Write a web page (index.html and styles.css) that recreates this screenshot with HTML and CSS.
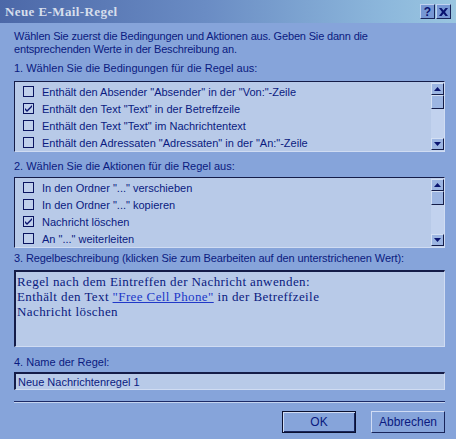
FILE: index.html
```html
<!DOCTYPE html>
<html>
<head>
<meta charset="utf-8">
<title>Neue E-Mail-Regel</title>
<link rel="stylesheet" href="styles.css">
</head>
<body>
<div class="window">
  <div class="titlebar">
    <span class="title">Neue E-Mail-Regel</span>
    <div class="tbtns">
      <span class="tbtn help">?</span>
      <span class="tbtn close"><svg width="9" height="8" viewBox="0 0 9 8"><path d="M0 0h2.5l2 2.6 2-2.6H9L6 4l3 4H6.5l-2-2.6-2 2.6H0l3-4z" fill="#0a1470"/></svg></span>
    </div>
  </div>
  <div class="content">
    <p class="intro">Wählen Sie zuerst die Bedingungen und Aktionen aus. Geben Sie dann die<br>entsprechenden Werte in der Beschreibung an.</p>

    <div class="label l1">1. Wählen Sie die Bedingungen für die Regel aus:</div>
    <div class="list list1">
      <div class="rows">
        <div class="row"><span class="cb"></span>Enthält den Absender "Absender" in der "Von:"-Zeile</div>
        <div class="row"><span class="cb checked"><svg width="9" height="9" viewBox="0 0 9 9"><path d="M1 4l2 2 5-5v2L3 8 1 6z" fill="#0a1470"/></svg></span>Enthält den Text "Text" in der Betreffzeile</div>
        <div class="row"><span class="cb"></span>Enthält den Text "Text" im Nachrichtentext</div>
        <div class="row"><span class="cb"></span>Enthält den Adressaten "Adressaten" in der "An:"-Zeile</div>
      </div>
      <div class="scroll">
        <span class="sbtn"><svg width="7" height="4" viewBox="0 0 7 4"><path d="M3.5 0L7 4H0z" fill="#0a1470"/></svg></span>
        <span class="thumb"></span>
        <span class="track"></span>
        <span class="sbtn"><svg width="7" height="4" viewBox="0 0 7 4"><path d="M0 0h7L3.5 4z" fill="#0a1470"/></svg></span>
      </div>
    </div>

    <div class="label l2">2. Wählen Sie die Aktionen für die Regel aus:</div>
    <div class="list list2">
      <div class="rows">
        <div class="row"><span class="cb"></span>In den Ordner "..." verschieben</div>
        <div class="row"><span class="cb"></span>In den Ordner "..." kopieren</div>
        <div class="row"><span class="cb checked"><svg width="9" height="9" viewBox="0 0 9 9"><path d="M1 4l2 2 5-5v2L3 8 1 6z" fill="#0a1470"/></svg></span>Nachricht löschen</div>
        <div class="row"><span class="cb"></span>An "..." weiterleiten</div>
      </div>
      <div class="scroll">
        <span class="sbtn"><svg width="7" height="4" viewBox="0 0 7 4"><path d="M3.5 0L7 4H0z" fill="#0a1470"/></svg></span>
        <span class="thumb"></span>
        <span class="track"></span>
        <span class="sbtn"><svg width="7" height="4" viewBox="0 0 7 4"><path d="M0 0h7L3.5 4z" fill="#0a1470"/></svg></span>
      </div>
    </div>

    <div class="label l3">3. Regelbeschreibung (klicken Sie zum Bearbeiten auf den unterstrichenen Wert):</div>
    <div class="desc">
      Regel nach dem Eintreffen der Nachricht anwenden:<br>
      Enthält den Text <a class="link" href="#">"Free Cell Phone"</a> in der Betreffzeile<br>
      Nachricht löschen
    </div>

    <div class="label l4">4. Name der Regel:</div>
    <div class="input">Neue Nachrichtenregel 1</div>

    <div class="sep"></div>

    <div class="buttons">
      <span class="btn default">OK</span>
      <span class="btn">Abbrechen</span>
    </div>
  </div>
</div>
</body>
</html>
```

FILE: styles.css
```css
html, body {
  margin: 0;
  padding: 0;
  background: #86a4da;
}

body {
  font-family: "Liberation Sans", Arial, sans-serif;
  font-size: 11px;
  color: #0a1a80;
}

.window {
  width: 456px;
  height: 439px;
  box-sizing: border-box;
  background: #86a4da;
  overflow: hidden;
}

.titlebar {
  height: 23px;
  display: flex;
  align-items: center;
  justify-content: space-between;
  padding: 0 5px 0 5px;
  box-sizing: border-box;
  background: linear-gradient(to right, #4c68a8 0%, #6a8cc4 45%, #8db8dc 85%, #9ac6e0 100%);
}

.title {
  font-family: "Liberation Serif", "Times New Roman", serif;
  font-weight: bold;
  font-size: 13px;
  color: #d6deec;
  letter-spacing: 0.4px;
}

.tbtns {
  display: flex;
  gap: 1px;
}

.tbtn {
  width: 13px;
  height: 13px;
  display: flex;
  align-items: center;
  justify-content: center;
  background: #7797d4;
  border: 1px solid;
  border-color: #c0d2f0 #18245a #18245a #c0d2f0;
  font-weight: bold;
  font-size: 12px;
  color: #0a1470;
}

.content {
  padding: 7px 11px 0 14px;
}

.intro {
  margin: 0;
  line-height: 13px;
  letter-spacing: -0.17px;
}

.label {
  line-height: 13px;
}

.l1 { margin-top: 6px; }
.l2 { margin-top: 8px; }
.l3 { margin-top: 4px; letter-spacing: -0.1px; }
.l4 { margin-top: 9px; }

.list {
  height: 71px;
  box-sizing: border-box;
  background: #b8cae8;
  border: 1px solid;
  border-color: #141c48 #d0dcf2 #d0dcf2 #141c48;
  display: flex;
}

.list1 { margin-top: 6px; }
.list2 { margin-top: 4px; }

.rows {
  flex: 1;
  padding-top: 1px;
}

.row {
  height: 17px;
  display: flex;
  align-items: center;
  padding-left: 8px;
  white-space: nowrap;
}

.cb {
  width: 9px;
  height: 9px;
  border: 1px solid #0a1460;
  background: #c0d0ec;
  margin-right: 8px;
  display: flex;
  align-items: center;
  justify-content: center;
  flex: none;
}

.scroll {
  width: 13px;
  display: flex;
  flex-direction: column;
  padding-top: 1px;
  padding-bottom: 1px;
  background: #c2d2ee;
}

.sbtn {
  height: 12px;
  box-sizing: border-box;
  display: flex;
  align-items: center;
  justify-content: center;
  background: #9cb5e2;
  border: 1px solid;
  border-color: #d4e0f4 #141c48 #141c48 #d4e0f4;
}

.thumb {
  height: 14px;
  box-sizing: border-box;
  background: #9cb5e2;
  border: 1px solid;
  border-color: #d4e0f4 #141c48 #141c48 #d4e0f4;
}

.track {
  flex: 1;
}

.desc {
  margin-top: 5px;
  height: 77px;
  box-sizing: border-box;
  background: #b8cae8;
  border-style: solid;
  border-width: 2px 1px 1px 2px;
  border-color: #141c48 #d0dcf2 #d0dcf2 #141c48;
  padding: 2px 1px;
  font-family: "Liberation Serif", "Times New Roman", serif;
  font-size: 13px;
  line-height: 15px;
  letter-spacing: 0.4px;
  color: #0a1a80;
}

.link {
  color: #2038c8;
  text-decoration: underline;
}

.input {
  margin-top: 3px;
  height: 18px;
  box-sizing: border-box;
  background: #b8cae8;
  border-style: solid;
  border-width: 2px 1px 1px 2px;
  border-color: #141c48 #d0dcf2 #d0dcf2 #141c48;
  padding: 0 2px;
  display: flex;
  align-items: center;
}

.sep {
  margin-top: 11px;
  height: 0;
  border-top: 1px solid #1c2a66;
  border-bottom: 1px solid #c4d4f0;
}

.buttons {
  margin-top: 8px;
  display: flex;
  justify-content: flex-end;
  gap: 15px;
}

.btn {
  width: 74px;
  height: 22px;
  box-sizing: border-box;
  display: flex;
  align-items: center;
  justify-content: center;
  font-size: 12px;
  background: #86a4da;
  border: 1px solid;
  border-color: #d0dcf4 #18245a #18245a #d0dcf4;
}

.btn.default {
  border: 1px solid #0a1030;
  box-shadow: inset 1px 1px 0 #d0dcf4, inset -1px -1px 0 #18245a;
}
```
